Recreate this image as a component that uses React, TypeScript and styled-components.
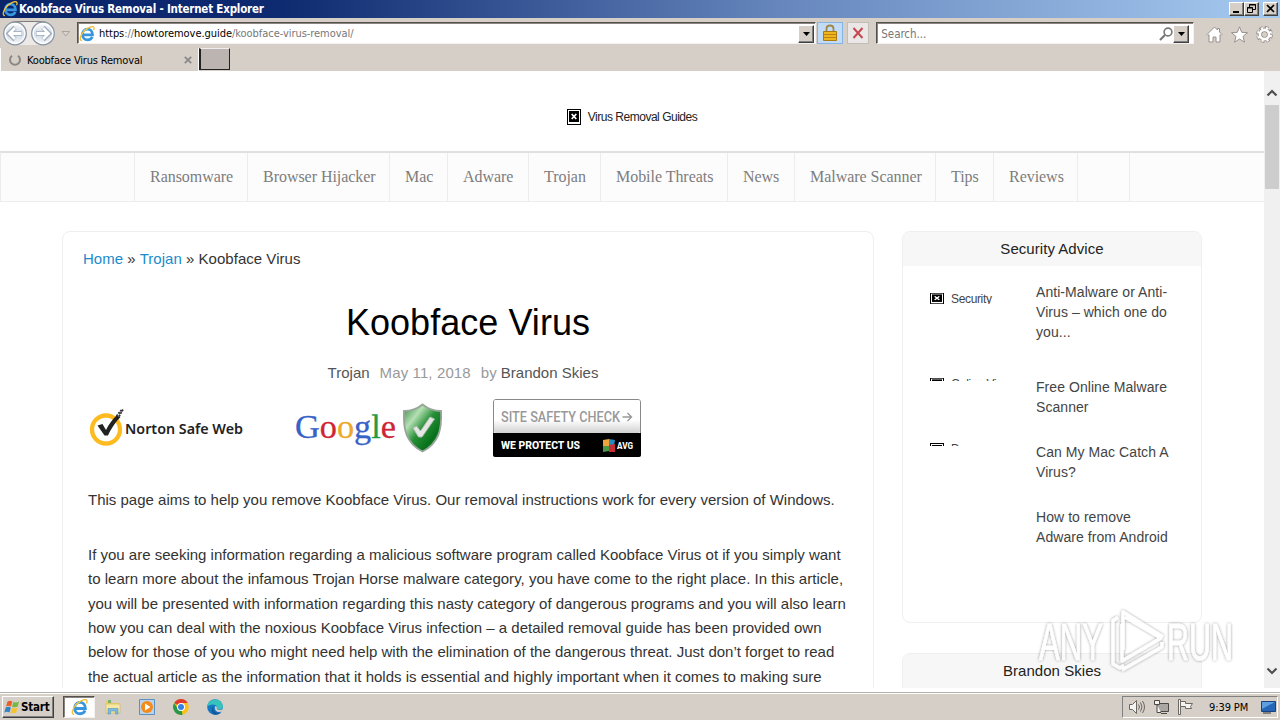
import React from "react"
import styled, { createGlobalStyle, css } from "styled-components"

const uiFont = css`
  font-family: "DejaVu Sans Condensed", "DejaVu Sans", sans-serif;
  font-stretch: condensed;
`

const raised = css`
  background: #d6cfc8;
  border: 1px solid;
  border-color: #fff #404040 #404040 #fff;
  box-shadow: inset -1px -1px 0 #808080;
`

const sunken = css`
  background: #fff;
  border: 1px solid;
  border-color: #55504b #f4f1ee #f4f1ee #55504b;
  box-shadow: inset 1px 1px 0 #8a8580;
`

const GlobalStyle = createGlobalStyle`
  * {
    box-sizing: border-box;
  }
  body {
    margin: 0;
    overflow: hidden;
    background: #fff;
  }
  svg {
    display: block;
    flex: none;
  }
`

const Screen = styled.div`
  position: relative;
  display: flex;
  flex-direction: column;
  width: 1280px;
  height: 720px;
  overflow: hidden;
  font-family: "Liberation Sans", Arial, sans-serif;
`

/* ---------- browser chrome ---------- */

const TitleBar = styled.div`
  ${uiFont}
  display: flex;
  align-items: center;
  height: 18px;
  padding: 0 2px;
  background: linear-gradient(90deg, #0a246a 0%, #0e2a70 22%, #6686bd 61%, #a6caf0 100%);
  color: #fff;
  font-size: 11.5px;
  font-weight: bold;
`

const TitleText = styled.span`
  flex: 1;
  padding-left: 1px;
  letter-spacing: -0.2px;
  white-space: nowrap;
`

const WindowButton = styled.span<{ $gap?: number }>`
  ${raised}
  width: 15px;
  height: 14px;
  margin-left: ${p => p.$gap || 0}px;
`

const Toolbar = styled.div`
  display: flex;
  align-items: flex-start;
  height: 30px;
  padding: 4px 7px 0 2px;
  background: #d6cfc8;
`

const NavButtons = styled.div`
  height: 24px;
  margin-top: -1px;
`

const AddressBar = styled.div`
  ${uiFont}
  ${sunken}
  display: flex;
  align-items: center;
  width: 740px;
  height: 22px;
  margin-left: 5px;
  padding: 1px 1px 0 1px;
  color: #777;
  font-size: 11px;
  b {
    color: #000;
    font-weight: normal;
  }
`

const Url = styled.span`
  flex: 1;
  padding-left: 4px;
  letter-spacing: -0.05px;
  white-space: nowrap;
`

const DropButton = styled.span`
  ${raised}
  display: flex;
  align-items: center;
  justify-content: center;
  width: 16px;
  height: 18px;
`

const ToolButton = styled.span<{ $active?: boolean }>`
  display: flex;
  align-items: center;
  justify-content: center;
  width: ${p => (p.$active ? 26 : 22)}px;
  height: 22px;
  margin-left: ${p => (p.$active ? 1 : 4)}px;
  border: 1px solid ${p => (p.$active ? "#86b4e6" : "#c3bdb8")};
  background: ${p => (p.$active ? "#c3dcf6" : "#eae7e6")};
`

const SearchBar = styled(AddressBar)`
  width: 318px;
  margin-left: 7px;
  padding-right: 4px;
  padding-left: 0;
  font-size: 11.5px;
`

const CommandIcons = styled.div`
  display: flex;
  gap: 8px;
  margin: 4px 0 0 12px;
`

const TabRow = styled.div`
  ${uiFont}
  display: flex;
  height: 23px;
  background: #d6cfc8;
  color: #000;
  font-size: 11px;
`

const Tab = styled.div`
  display: flex;
  align-items: center;
  width: 199px;
  padding: 1px 6px 0 8px;
  border-left: 1px solid #fff;
  border-right: 1px solid #fff;
`

const TabLabel = styled.span`
  flex: 1;
  padding-left: 6px;
  letter-spacing: -0.18px;
`

const NewTab = styled.span`
  width: 31px;
  height: 22px;
  border: solid #222;
  border-width: 1px 1px 1px 2px;
  border-top-color: #eee;
  background: #bbb4b0;
`

/* ---------- page ---------- */

const Viewport = styled.div`
  display: flex;
  height: 621px;
  overflow: hidden;
`

const Page = styled.div`
  width: 1264px;
  height: 617px;
  overflow: hidden;
`

const SiteHeader = styled.header`
  display: flex;
  align-items: center;
  justify-content: center;
  height: 80px;
  padding: 12px 0 0 0;
  color: #222;
`

const AltText = styled.span`
  padding-left: 7px;
  font-size: 12px;
  letter-spacing: -0.48px;
  white-space: nowrap;
`

const Menu = styled.nav`
  display: flex;
  height: 51px;
  border: 1px solid #ececec;
  border-top: 2px solid #e0e0e0;
  border-right: 0;
  background: #fcfcfc;
`

const MenuItem = styled.a<{ $width: number }>`
  width: ${p => p.$width}px;
  height: 48px;
  padding-left: 15px;
  border-left: 1px solid #ececec;
  color: #7c7c7c;
  font: 16px/47px "Liberation Serif", "Times New Roman", serif;
  letter-spacing: -0.04px;
  white-space: nowrap;
  &:first-child {
    margin-left: 133px;
  }
  &:last-child {
    border-right: 1px solid #ececec;
  }
`

const Columns = styled.div`
  display: flex;
  align-items: flex-start;
  gap: 28px;
  padding: 29px 0 0 62px;
`

const Article = styled.main`
  width: 812px;
  height: 500px;
  padding: 0 20px;
  border: 1px solid #efefef;
  border-radius: 8px;
`

const Breadcrumb = styled.div`
  padding-top: 17px;
  color: #333;
  font-size: 15px;
  line-height: 20px;
  letter-spacing: 0.03px;
  a {
    color: #1a8bcb;
  }
`

const Title = styled.h1`
  margin: 32px 0 0;
  color: #000;
  font-size: 36px;
  font-weight: normal;
  line-height: 44px;
  letter-spacing: 0.05px;
  text-align: center;
`

const Meta = styled.div`
  display: flex;
  justify-content: center;
  margin: 18px 10px 0 0;
  color: #999;
  font-size: 15px;
  line-height: 20px;
  white-space: pre;
  b {
    color: #555;
    font-weight: normal;
  }
`

const MetaDate = styled.span`
  margin: 0 10px;
  letter-spacing: 0.12px;
`

const Badges = styled.div`
  display: flex;
  height: 60px;
  margin: 16px 0 0 5px;
`

const Badge = styled.div<{ $width: number }>`
  width: ${p => p.$width}px;
`

const Paragraph = styled.p<{ $top: number }>`
  margin: ${p => p.$top}px 0 0 5px;
  color: #333;
  font-size: 15px;
  line-height: 24.4px;
`

const Line = styled.span<{ $spacing?: number }>`
  display: block;
  letter-spacing: ${p => p.$spacing || 0}px;
  white-space: nowrap;
`

const Sidebar = styled.aside`
  display: flex;
  flex-direction: column;
  gap: 30px;
  width: 300px;
`

const Widget = styled.section`
  height: 392px;
  overflow: hidden;
  border: 1px solid #efefef;
  border-radius: 8px;
`

const WidgetTitle = styled.h3`
  height: 34px;
  margin: 0;
  background: #f7f7f7;
  color: #222;
  font-size: 15px;
  font-weight: normal;
  line-height: 33px;
  letter-spacing: 0.05px;
  text-align: center;
`

const Posts = styled.div`
  padding: 16px 0 0 27px;
`

const Post = styled.div<{ $height: number }>`
  display: flex;
  align-items: flex-start;
  height: ${p => p.$height}px;
  color: #444;
`

const Thumb = styled.div<{ $top?: number; $height: number }>`
  display: flex;
  align-items: flex-start;
  width: 106px;
  height: ${p => p.$height}px;
  margin-top: ${p => p.$top || 0}px;
  overflow: hidden;
  ${AltText} {
    letter-spacing: -0.35px;
    line-height: 12px;
  }
`

const PostTitle = styled.div`
  width: 150px;
  font-size: 14px;
  line-height: 20px;
  letter-spacing: 0.06px;
  white-space: pre-line;
`

const Scrollbar = styled.div`
  display: flex;
  flex-direction: column;
  align-items: center;
  width: 16px;
  height: 617px;
  padding: 18px 0 13px;
  background: #f0f0f0;
`

const ScrollThumb = styled.div`
  width: 14px;
  height: 84px;
  margin: 8px 0 auto 0;
  background: #cdcdcd;
`

/* ---------- taskbar ---------- */

const Taskbar = styled.div`
  ${uiFont}
  display: flex;
  align-items: center;
  height: 28px;
  padding: 1px 2px 0 2px;
  border-top: 1px solid #b5afa9;
  box-shadow: inset 0 1px 0 #fff;
  background: #d6cfc8;
  color: #000;
  font-size: 11px;
`

const StartButton = styled.div`
  ${raised}
  display: flex;
  align-items: center;
  width: 52px;
  height: 22px;
  padding-left: 1px;
  font-weight: bold;
  font-size: 11.5px;
  letter-spacing: -0.2px;
`

const TaskButton = styled.div<{ $active?: boolean }>`
  display: flex;
  align-items: center;
  justify-content: center;
  width: ${p => (p.$active ? 32 : 34)}px;
  height: 22px;
  margin-left: ${p => (p.$active ? 9 : 0)}px;
  ${p => p.$active && sunken}
  & + & {
    padding-left: 2px;
  }
`

const Tray = styled.div`
  display: flex;
  align-items: center;
  gap: 7px;
  width: 156px;
  height: 22px;
  margin-left: auto;
  padding-left: 5px;
  border: 1px solid;
  border-color: #808080 #fff #fff #808080;
`

const Clock = styled.span`
  width: 45px;
  margin-left: 8px;
  letter-spacing: -0.1px;
  white-space: nowrap;
`

const Watermark = styled.div`
  position: absolute;
  top: 604px;
  left: 1030px;
  pointer-events: none;
`

/* ---------- icons ---------- */

const IeIcon = ({ size = 16 }: { size?: number }) => (
  <svg width={size} height={size} viewBox="0 0 16 16" fill="none">
    <path
      d="M3.600 8.900h9.900c0-3.700-2.200-5.700-5-5.700S3.400 5.500 3.400 8.600s2.100 5.300 5.200 5.300c2.300 0 3.900-1.100 4.600-3"
      stroke="#3596df"
      strokeWidth="2.700"
    />
    <path d="M3.700 7C4.500 4.700 6.300 3.200 8.600 3.200" stroke="#8fd2fa" strokeWidth="1.300" />
    <path
      d="M3 14.700C0 14.700 1 9 5.500 4.700 9 1.400 13.700-.4 14.800 1.300c.5.800.2 1.900-.2 2.900"
      stroke="#f0bf35"
      strokeWidth="1.300"
    />
  </svg>
)

const BackForward = () => (
  <svg width="70" height="26" viewBox="0 0 70 26" fill="none">
    <defs>
      <linearGradient id="orb" x1="0" y1="0" x2="0" y2="1">
        <stop offset="0" stopColor="#fff" />
        <stop offset=".5" stopColor="#d3dae4" />
        <stop offset="1" stopColor="#f4f8fb" />
      </linearGradient>
    </defs>
    <path d="M13 1h28c7 0 12 5 12 11s-5 12-12 12H13C6 24 1 19 1 12S6 1 13 1z" fill="#ece9e7" />
    <path d="M9 1.500c5-1.400 31-1.400 36 0" stroke="#777" />
    {[13, 41].map(x => (
      <g key={x}>
        <circle cx={x} cy="12.500" r="11.300" fill="url(#orb)" stroke="#8793a3" strokeWidth="1.200" />
        <circle cx={x} cy="12.500" r="9.800" stroke="#fff" strokeWidth="1.200" />
      </g>
    ))}
    <g stroke="#9ba9bb" strokeWidth="4.600">
      <path d="M20 12.500H8M13 6.500l-6 6 6 6" />
      <path d="M34 12.500h12M41 6.500l6 6-6 6" />
    </g>
    <g stroke="#fff" strokeWidth="2.800">
      <path d="M19.500 12.500H8M13 7l-5.500 5.500L13 18" />
      <path d="M34.500 12.500H46M41 7l5.500 5.500L41 18" />
    </g>
    <path d="M60 10.500h7.500l-3.700 4.500z" fill="#d9d4d0" stroke="#aaa39d" />
  </svg>
)

const DownArrow = () => (
  <svg width="7" height="4" viewBox="0 0 7 4">
    <path d="M0 0h7L3.500 4z" fill="#000" />
  </svg>
)

const Broken = ({ height }: { height: number }) => (
  <svg width="14" height={height} viewBox="0 0 14 16" preserveAspectRatio="none">
    <path d="M0 0h14v16H0z" fill="#000" />
    <path d="M1 1h12v14H1z" fill="#fff" />
    <path d="M2 2h10v11H2z" fill="#000" />
    <path d="M4.700 5l4.600 5M9.300 5l-4.600 5" stroke="#fff" strokeWidth="1.700" />
  </svg>
)

const Chevron = ({ down }: { down?: boolean }) => (
  <svg width="12" height="8" viewBox="0 0 12 8" fill="none">
    <path d={down ? "M1.500 1.500L6 6l4.500-4.500" : "M1.500 6.500L6 2l4.500 4.500"} stroke="#505050" strokeWidth="2.200" />
  </svg>
)

const NortonLogo = () => (
  <svg width="160" height="60" viewBox="0 0 160 60">
    <circle cx="18" cy="30.500" r="14" fill="#fff" stroke="#fdbb20" strokeWidth="4.300" />
    <path d="M9.500 26.500l5-1.500 3.500 6c3-6 6-10 10.500-14.500l4 1.500c-5.500 6-9 11-12.500 18.500h-3.500z" fill="#222" />
    <path d="M28.500 17l5-6M31 17.500l4-7" stroke="#333" strokeWidth="1.800" strokeDasharray="2 1" />
    <text
      x="37"
      y="35"
      textLength="118"
      lengthAdjust="spacingAndGlyphs"
      fontFamily="Noto Sans, sans-serif"
      fontSize="14.500"
      fontWeight="600"
      fill="#222"
    >
      Norton Safe Web
    </text>
  </svg>
)

const GoogleLogo = () => (
  <svg width="156" height="60" viewBox="0 0 156 60">
    <defs>
      <linearGradient id="shield" x1="0" y1="0" x2="1" y2="1">
        <stop offset="0" stopColor="#2c8a3a" />
        <stop offset=".28" stopColor="#b5dfb4" />
        <stop offset=".5" stopColor="#279036" />
        <stop offset=".75" stopColor="#08701a" />
        <stop offset="1" stopColor="#47a64d" />
      </linearGradient>
    </defs>
    <text
      x="1"
      y="39"
      textLength="101"
      lengthAdjust="spacingAndGlyphs"
      fontFamily="Liberation Serif, serif"
      fontSize="34"
      strokeWidth=".3"
    >
      <tspan fill="#3762c8" stroke="#3762c8">G</tspan>
      <tspan fill="#cf2435" stroke="#cf2435">o</tspan>
      <tspan fill="#eda92a" stroke="#eda92a">o</tspan>
      <tspan fill="#3762c8" stroke="#3762c8">g</tspan>
      <tspan fill="#279a43" stroke="#279a43">l</tspan>
      <tspan fill="#cf2435" stroke="#cf2435">e</tspan>
    </text>
    <path
      d="M128.500 5.500c5 4 12 6.500 18.500 6.500 1 18-2 32-18.500 40.500-16.500-8.500-19.500-22.500-18.500-40.500 6.500 0 13.500-2.500 18.500-6.500z"
      fill="url(#shield)"
      stroke="#98a59a"
      strokeWidth="1.800"
    />
    <path d="M119 29l3.500-2 4 5 9.500-14 4.500 2-12.500 18h-3.500z" fill="#e4e7e4" stroke="#b0b9b0" />
  </svg>
)

const AvgBadge = () => (
  <svg width="148" height="60" viewBox="0 0 148 60">
    <defs>
      <linearGradient id="plate" x1="0" y1="0" x2="0" y2="1">
        <stop offset=".6" stopColor="#fff" />
        <stop offset="1" stopColor="#d0d0d0" />
      </linearGradient>
    </defs>
    <rect x=".5" y=".5" width="147" height="57" rx="2.500" fill="url(#plate)" stroke="#888" />
    <rect x="1" y="1" width="146" height="33" rx="2" fill="url(#plate)" />
    <path d="M0 34h148v22q0 2-2 2H2q-2 0-2-2z" fill="#000" />
    <g fontFamily="Roboto, sans-serif">
      <text x="8" y="23" textLength="119" lengthAdjust="spacingAndGlyphs" fontSize="14" fontWeight="500" fill="#999">
        SITE SAFETY CHECK
      </text>
      <text x="8" y="50" textLength="79" lengthAdjust="spacingAndGlyphs" fontSize="11.500" fontWeight="800" fill="#fff">
        WE PROTECT US
      </text>
      <text x="124" y="50" textLength="16" lengthAdjust="spacingAndGlyphs" fontSize="9.500" fontWeight="800" fill="#fff">
        AVG
      </text>
    </g>
    <path d="M129.500 18h9M134.500 14l4 4-4 4" stroke="#999" strokeWidth="1.400" fill="none" />
    <path d="M110 41l6-1v7h-6z" fill="#eda43c" />
    <path d="M116 40l6 1-1 6h-5z" fill="#238cba" />
    <path d="M110 47h6v5l-6 1z" fill="#4b9947" />
    <path d="M116 46l6-1v8h-6z" fill="#c62d35" />
  </svg>
)

const AnyRun = () => (
  <svg width="210" height="76" viewBox="0 0 210 76">
    <defs>
      <filter id="soft" x="-10%" y="-10%" width="120%" height="120%">
        <feDropShadow dx="0" dy="0" stdDeviation="1.800" floodColor="#000" floodOpacity=".6" />
      </filter>
    </defs>
    <g filter="url(#soft)" opacity=".7">
      <g fontFamily="Liberation Sans, sans-serif" fontSize="51" fill="#fff" stroke="#fff" strokeWidth=".6">
        <text x="9" y="56" textLength="64" lengthAdjust="spacingAndGlyphs">
          ANY
        </text>
        <text x="137" y="56" textLength="66" lengthAdjust="spacingAndGlyphs">
          RUN
        </text>
      </g>
      <path
        d="M93 46V8l40 25M88 13.500l-5 3V60l7 4 4-2.500M95 13l36 21-39 23V20M92 66l40-23v-5"
        fill="none"
        stroke="#fff"
        strokeWidth="3.400"
        strokeLinejoin="round"
      />
    </g>
  </svg>
)

const menu: [string, number][] = [
  ["Ransomware", 113],
  ["Browser Hijacker", 142],
  ["Mac", 58],
  ["Adware", 81],
  ["Trojan", 72],
  ["Mobile Threats", 127],
  ["News", 67],
  ["Malware Scanner", 141],
  ["Tips", 58],
  ["Reviews", 84],
  ["", 53],
]

const lines: [string, number][] = [
  ["If you are seeking information regarding a malicious software program called Koobface Virus ot if you simply want", 0],
  ["to learn more about the infamous Trojan Horse malware category, you have come to the right place. In this article,", 0.015],
  ["you will be presented with information regarding this nasty category of dangerous programs and you will also learn", 0],
  ["how you can deal with the noxious Koobface Virus infection – a detailed removal guide has been provided own", 0],
  ["below for those of you who might need help with the elimination of the dangerous threat. Just don’t forget to read", 0],
  ["the actual article as the information that it holds is essential and highly important when it comes to making sure", 0],
]

const App: React.FC = () => (
  <Screen>
    <GlobalStyle />
    <TitleBar>
      <IeIcon />
      <TitleText>Koobface Virus Removal - Internet Explorer</TitleText>
      <WindowButton>
        <svg width="13" height="12">
          <path d="M3 8h6v2H3z" />
        </svg>
      </WindowButton>
      <WindowButton>
        <svg width="13" height="12" fill="none" stroke="#000">
          <path d="M4.500 4V1.500h6v5H8M4 2h7M2.500 4.500h5v5h-5zM2 5h6" />
        </svg>
      </WindowButton>
      <WindowButton $gap={4}>
        <svg width="13" height="12">
          <path d="M3 2l7 7M10 2L3 9" stroke="#000" strokeWidth="1.700" />
        </svg>
      </WindowButton>
    </TitleBar>
    <Toolbar>
      <NavButtons>
        <BackForward />
      </NavButtons>
      <AddressBar>
        <IeIcon />
        <Url>
          <b>https</b>://<b>howtoremove.guide</b>/koobface-virus-removal/
        </Url>
        <DropButton>
          <DownArrow />
        </DropButton>
      </AddressBar>
      <ToolButton $active>
        <svg width="14" height="18" viewBox="0 0 14 18">
          <path d="M3.500 9V4.500Q3.500 1.500 7 1.500t3.500 3V9" fill="none" stroke="#a08748" strokeWidth="1.800" />
          <path d="M.5 7.500h13v9H.5z" fill="#eeb51c" stroke="#aa7b12" />
          <path d="M1 10.500h12M1 13.500h12" stroke="#b98212" />
        </svg>
      </ToolButton>
      <ToolButton>
        <svg width="12" height="12" viewBox="0 0 12 12">
          <path d="M1.500 1l9 10M10.500 1l-9 10" stroke="#c54850" strokeWidth="2" />
        </svg>
      </ToolButton>
      <SearchBar>
        <Url>Search...</Url>
        <svg width="14" height="14" viewBox="0 0 14 14" fill="none" stroke="#777">
          <circle cx="9" cy="5" r="3.900" strokeWidth="1.600" />
          <path d="M6 8l-5 5" strokeWidth="2.200" />
        </svg>
        <DropButton>
          <DownArrow />
        </DropButton>
      </SearchBar>
      <CommandIcons>
        <svg width="17" height="17" viewBox="0 0 17 17" fill="#fff" stroke="#96918d">
          <path d="M1 8.500L8.500 1l3 3V2.500h2V6L16 8.500l-1 1-1-.8v7.300h-4v-5H7v5H3V8.700l-1 .8z" />
        </svg>
        <svg width="17" height="17" viewBox="0 0 17 17" fill="#fff" stroke="#96918d">
          <path d="M8.500.8l2.200 5.500 5.800.4-4.500 3.700 1.500 5.800-5-3.200-5 3.200L5 10.400.5 6.700l5.800-.4z" />
        </svg>
        <svg width="17" height="17" viewBox="0 0 17 17" fill="none">
          <circle cx="8.500" cy="8.500" r="6.600" stroke="#96918d" strokeWidth="3.600" strokeDasharray="3.400 1.784" />
          <circle cx="8.500" cy="8.500" r="4.600" stroke="#96918d" strokeWidth="4.200" />
          <circle cx="8.500" cy="8.500" r="6.400" stroke="#fff" strokeWidth="2.400" strokeDasharray="2 3.027" strokeDashoffset="-.7" />
          <circle cx="8.500" cy="8.500" r="4.600" stroke="#fff" strokeWidth="2.600" />
        </svg>
      </CommandIcons>
    </Toolbar>
    <TabRow>
      <Tab>
        <svg width="12" height="12" viewBox="0 0 12 12" fill="none">
          <path d="M3 1.800a5 5 0 1 0 6 0" stroke="#8c8782" strokeWidth="2" />
        </svg>
        <TabLabel>Koobface Virus Removal</TabLabel>
        <svg width="8" height="8" viewBox="0 0 8 8">
          <path d="M.8.800l6.400 6.400M7.200.800L.8 7.200" stroke="#888" strokeWidth="1.700" />
        </svg>
      </Tab>
      <NewTab />
    </TabRow>

    <Viewport>
      <Page>
        <SiteHeader>
          <Broken height={16} />
          <AltText>Virus Removal Guides</AltText>
        </SiteHeader>
        <Menu>
          {menu.map(([label, width]) => (
            <MenuItem key={label} $width={width}>
              {label}
            </MenuItem>
          ))}
        </Menu>
        <Columns>
          <Article>
            <Breadcrumb>
              <a>Home</a> » <a>Trojan</a> » Koobface Virus
            </Breadcrumb>
            <Title>Koobface Virus</Title>
            <Meta>
              <b>Trojan</b>
              <MetaDate>May 11, 2018</MetaDate>
              by <b>Brandon Skies</b>
            </Meta>
            <Badges>
              <Badge $width={206}>
                <NortonLogo />
              </Badge>
              <Badge $width={199}>
                <GoogleLogo />
              </Badge>
              <AvgBadge />
            </Badges>
            <Paragraph $top={29}>
              <Line>
                This page aims to help you remove Koobface Virus. Our removal instructions work for every version of Windows.
              </Line>
            </Paragraph>
            <Paragraph $top={30.4}>
              {lines.map(([text, spacing]) => (
                <Line key={text} $spacing={spacing}>
                  {text}
                </Line>
              ))}
            </Paragraph>
          </Article>
          <Sidebar>
            <Widget>
              <WidgetTitle>Security Advice</WidgetTitle>
              <Posts>
                <Post $height={95}>
                  <Thumb $top={11} $height={11}>
                    <Broken height={11} />
                    <AltText>Security</AltText>
                  </Thumb>
                  <PostTitle>{"Anti-Malware or Anti-\nVirus – which one do\nyou..."}</PostTitle>
                </Post>
                <Post $height={65}>
                  <Thumb $top={1} $height={3}>
                    <Broken height={11} />
                    <AltText>Online Virus</AltText>
                  </Thumb>
                  <PostTitle>{"Free Online Malware\nScanner"}</PostTitle>
                </Post>
                <Post $height={65}>
                  <Thumb $top={1} $height={3}>
                    <Broken height={16} />
                    <AltText>Does</AltText>
                  </Thumb>
                  <PostTitle>{"Can My Mac Catch A\nVirus?"}</PostTitle>
                </Post>
                <Post $height={60}>
                  <Thumb $height={4} />
                  <PostTitle>{"How to remove\nAdware from Android"}</PostTitle>
                </Post>
              </Posts>
            </Widget>
            <Widget>
              <WidgetTitle>Brandon Skies</WidgetTitle>
            </Widget>
          </Sidebar>
        </Columns>
      </Page>
      <Scrollbar>
        <Chevron />
        <ScrollThumb />
        <Chevron down />
      </Scrollbar>
    </Viewport>

    <Taskbar>
      <StartButton>
        <svg width="17" height="16" viewBox="0 0 17 16">
          <path d="M3.500 2.500Q6 1 8.300 2.500L7 7.500Q4.500 6 2 7.500z" fill="#e86027" />
          <path d="M9.300 3Q12 4.200 15 2.500L13.700 7.500Q11 9 8 7.800z" fill="#75b843" />
          <path d="M1.700 8.500Q4.500 7 6.800 8.500L5.500 13.500Q3 12 .4 13.500z" fill="#3182c6" />
          <path d="M7.800 9Q10.500 10.200 13.500 8.500L12.200 13.500Q9.500 15 6.500 13.800z" fill="#f6c32e" />
        </svg>
        Start
      </StartButton>
      <TaskButton $active>
        <IeIcon size={17} />
      </TaskButton>
      <TaskButton>
        <svg width="16" height="16" viewBox="0 0 16 16">
          <path d="M1 2h5l1 2h7v9H1z" fill="#eccd69" />
          <path d="M3 1h3v3H3z" fill="#79b36a" />
          <path d="M1 5h14v9H1z" fill="#f7e7a2" stroke="#d1b65c" strokeWidth=".6" />
          <path d="M3 15V9.500h10V15h-2.500v-3h-5v3z" fill="#7fbbdf" stroke="#4d93be" strokeWidth=".6" />
        </svg>
      </TaskButton>
      <TaskButton>
        <svg width="16" height="16" viewBox="0 0 16 16">
          <path d="M.5.500h15v15H.5z" fill="#bcd4e9" stroke="#5b90c2" />
          <circle cx="8" cy="8" r="6" fill="#f28a1d" />
          <path d="M6 4.500l5.500 3.500L6 11.500z" fill="#fff" />
        </svg>
      </TaskButton>
      <TaskButton>
        <svg width="16" height="16" viewBox="0 0 16 16">
          <circle cx="8" cy="8" r="7.800" fill="#fbc116" />
          <path d="M8 8L1.200 4.100A7.800 7.800 0 0 1 14.800 4.100H8z" fill="#df3b2f" />
          <path d="M8 8l1.500 7.700A7.800 7.800 0 0 1 1.200 4.100L5 10z" fill="#28984a" />
          <circle cx="8" cy="8" r="4" fill="#fff" />
          <circle cx="8" cy="8" r="3" fill="#377fe5" />
        </svg>
      </TaskButton>
      <TaskButton>
        <svg width="16" height="16" viewBox="0 0 16 16">
          <circle cx="8" cy="8" r="7.800" fill="#1677c2" />
          <path d="M.3 7.500C1-2 16-2 15.800 7.500c0 3-4 3.800-6 2.500 1-3-1-4.500-4-4.500-2.500 0-4.500 1-5.500 2z" fill="#36c3bd" />
          <path d="M7 7c-2 3 0 7 5 7 1 0 2-.5 3-1.500-2 3-5 3.500-7.500 3.200C4 14 3.500 9 7 7z" fill="#125a9d" />
          <path d="M8 7.500c1.500-.8 2.200.3 1.800 2.500 1.500 1.300 4 1.300 6 .1l-.8 2.400C11 14 7 12 8 7.500z" fill="#d6cfc8" />
        </svg>
      </TaskButton>
      <Tray>
        <svg width="18" height="16" viewBox="0 0 18 16" fill="#f6f4f2" stroke="#6b6763">
          <path d="M1.500 5.500h3l4-4v13l-4-4h-3z" />
          <path d="M10.500 5.500q2 2.500 0 5M12.500 3.500q3 4.500 0 9M14.500 2q4 6 0 12" fill="none" />
        </svg>
        <svg width="17" height="16" viewBox="0 0 17 16" fill="#f6f4f2" stroke="#4c4845">
          <path d="M4.500 4.500h11v8h-11z" fill="#aaa6a2" />
          <path d="M8 14.500h6" />
          <path d="M1.500 1.500h5v4h-5zM4 5.500v8h4" />
        </svg>
        <svg width="17" height="16" viewBox="0 0 17 16" fill="#f6f4f2" stroke="#6b6763">
          <path d="M1.500.5h2v15h-2z" />
          <path d="M3.500 2.500h5v2h7l-2 3 1 2h-6v-2h-5z" />
        </svg>
        <Clock>9:39 PM</Clock>
        <svg width="15" height="13" viewBox="0 0 15 13">
          <path d="M.5.500h14v10H.5z" fill="#2566b8" stroke="#17427d" />
          <path d="M1 1h13L1 8z" fill="#5e9fe0" />
          <path d="M2 12h8" stroke="#333" />
        </svg>
      </Tray>
    </Taskbar>
    <Watermark>
      <AnyRun />
    </Watermark>
  </Screen>
)

export default App
